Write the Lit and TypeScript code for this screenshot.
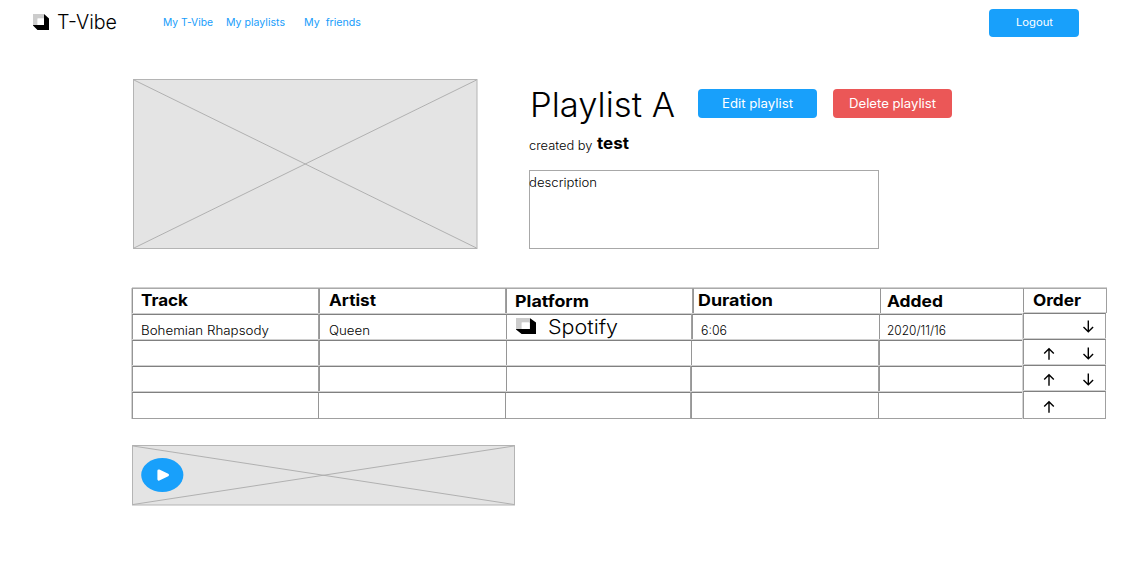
import { LitElement, html, css } from "lit";
import { customElement, property } from "lit/decorators.js";
import { styleMap } from "lit/directives/style-map.js";

/** One line of text stretched to a fixed measure. */
@customElement("fit-text")
class FitText extends LitElement {
  @property() text = "";
  @property({ type: Number }) width = 50;
  @property({ type: Number }) size = 13;
  @property({ type: Number }) weight = 400;
  static styles = css`
    :host { display: block; flex: none; }
    svg { display: block; overflow: visible; }
    text { fill: currentColor; font-family: Inter, "Noto Sans", sans-serif; white-space: pre; }
  `;
  render() {
    return html`<svg width=${this.width} height=${this.size}>
      <text x="0" y=${this.size * 0.8} font-size=${this.size} font-weight=${this.weight}
        textLength=${this.width} lengthAdjust="spacingAndGlyphs">${this.text}</text>
    </svg>`;
  }
}

const t = (text: string, width: number, size: number, weight = 400) =>
  html`<fit-text .text=${text} .width=${width} .size=${size} .weight=${weight}></fit-text>`;

const cube = (w: number, h: number) => html`<svg class="cube" width=${w} height=${h} viewBox="0 0 16 16" preserveAspectRatio="none">
  <path fill="#000" d="M11 0L16 4.5V16H4.5L0 11.5V11H11Z"/>
  <path fill="#ccc" d="M0 0H11V4.6H4.6V11H0Z"/>
  <path fill="#fff" d="M4.6 4.6H11V11H4.6Z"/>
</svg>`;

const arrow = (up: boolean) => html`<svg class="arrow" width="12" height="13" viewBox="0 0 12 13">
  <path d=${up ? "M6 12.7V1.8M1.2 6.6L6 1.8L10.8 6.6" : "M6.3 .4V11.8M1.5 7L6.3 11.8L11.1 7"}
    fill="none" stroke="#000" stroke-width="1.4"/>
</svg>`;

const cross = (w: number, h: number) => html`<svg class="cross" width=${w} height=${h} viewBox="0 0 ${w} ${h}">
  <rect x=".5" y=".5" width=${w - 1} height=${h - 1} fill="#e4e4e4" stroke="#b4b4b4"/>
  <path d="M1 1L${w - 1} ${h - 1}M1 ${h - 1}L${w - 1} 1" stroke="#aaa" stroke-width=".9"/>
</svg>`;

@customElement("app-root")
class AppRoot extends LitElement {
  static styles = css`
    :host { display: block; width: 1125px; height: 567px; background: #fff; color: #000; overflow: hidden; }
    * { box-sizing: border-box; }
    svg { display: block; flex: none; }
    header { display: flex; height: 79px; padding-left: 33px; align-items: flex-start; }
    .logo { display: flex; padding-top: 14px; width: 130px; }
    .logo .cube { margin-left: -0.5px; }
    .logo fit-text { margin: -1px 0 0 8px; }
    nav { display: flex; padding-top: 18px; width: 826px; color: #189dfb; }
    nav fit-text + fit-text { margin-left: 13px; }
    nav fit-text:last-child { margin-left: 19px; }
    .btn { display: flex; justify-content: center; border-radius: 4px; color: #fff; background: #18a0fb; }
    .logout { width: 90px; height: 28px; margin-top: 9px; padding-top: 9px; }
    .hero { display: flex; height: 209px; padding-left: 133px; }
    .info { margin-left: 52px; }
    .title { display: flex; height: 55px; }
    .name { margin-top: 10.5px; width: 145px; }
    .title .btn { width: 119px; height: 29px; margin: 10px 0 0 16px; padding-top: 9px; }
    .title .edit { margin-left: 23px; }
    .title .delete { background: #eb5757; }
    .by { display: flex; height: 36px; gap: 5px; padding-top: 2px; }
    .by fit-text { margin-left: -0.5px; }
    .by fit-text:first-child { margin-top: 3.5px; }
    .desc { width: 350px; height: 79px; border: 1px solid #a8a8a8; padding-top: 6px; margin-left: -1px; }
    .desc fit-text { margin-left: -1px; }
    .table { display: flex; padding-left: 132px; height: 157px; }
    .row { display: flex; height: 26px; }
    .cell { flex: none; display: flex; align-items: flex-start; border-left: 1px solid #969696; border-top: 1px solid #808080; box-shadow: 0 -1px #d0d0d0; }
    .cell.double { box-shadow: 0 -1px #d0d0d0, -1px 0 #a0a0a0; }
    .cell.soft { box-shadow: 0 -1px #d0d0d0, -1px 0 #d4d4d4; }
    .row:first-child .cell { border-top-color: #aaa; }
    .row:last-child { height: 27px; }
    .row:last-child .cell { border-bottom: 1px solid #a0a0a0; }
    .order .cell { border-right: 1px solid #a0a0a0; }
    .order .row { height: 26px; }
    .order .row:first-child { height: 25px; }
    .order .row:last-child { height: 28px; }
    .order .cell { gap: 27px; padding-left: 19px; }
    .slot { width: 12px; }
    .gap { width: 12px; }
    .player { display: grid; width: 383px; margin-left: 132px; }
    .player > * { grid-area: 1 / 1; }
    .play { align-self: center; margin-left: 9px; }
  `;

  private rows = [
    { w: [187, 187, 187, 187, 143], d: [1, 2, 3], c: [t("Track", 47, 16.2, 700), t("Artist", 47, 16.2, 700), t("Platform", 74, 16.2, 700), t("Duration", 75, 16.2, 700), t("Added", 56, 16.2, 700)], p: [[8, 4], [9, 4], [8, 5], [4, 4], [6, 5]] },
    { w: [187, 187, 186, 187, 144], d: [1, 3], c: [t("Bohemian Rhapsody", 128, 12.5, 300), t("Queen", 41, 12.5, 300), html`${cube(20, 16)}<div class="gap"></div>${t("Spotify", 70, 20, 300)}`, t("6:06", 26, 12.5, 300), t("2020/11/16", 59, 12.5, 300)], p: [[8, 9.5], [9, 10], [9, 3], [7.5, 9.5], [7, 9.5]] },
    { w: [187, 187, 185, 188, 144], d: [1, 4], c: [], p: [] },
    { w: [187, 187, 185, 188, 144], d: [1, 3, 4], c: [], p: [] },
    { w: [186, 187, 186, 187, 145], d: [3], c: [], p: [] },
  ] as { w: number[]; d: number[]; c: unknown[]; p: number[][] }[];

  render() {
    return html`
      <header>
        <div class="logo">${cube(16, 16)}${t("T-Vibe", 60, 20.2, 300)}</div>
        <nav>${t("My T-Vibe", 50, 10.4)}${t("My playlists", 59, 10.4)}${t("My  friends", 57, 10.4)}</nav>
        <div class="btn logout">${t("Logout", 37, 10.4)}</div>
      </header>
      <section class="hero">
        ${cross(344.5, 170)}
        <div class="info">
          <div class="title">
            <div class="name">${t("Playlist A", 145, 34, 300)}</div>
            <div class="btn edit">${t("Edit playlist", 71, 12.6)}</div>
            <div class="btn delete">${t("Delete playlist", 87, 12.6)}</div>
          </div>
          <div class="by">${t("created by", 63.5, 12.5, 300)}${t("test", 32, 16.5, 700)}</div>
          <div class="desc">${t("description", 68, 12.5, 300)}</div>
        </div>
      </section>
      <section class="table">
        <div>
          ${this.rows.map((r) => html`<div class="row">${r.w.map((w, i) => html`
            <div class="cell ${r.d.includes(i) ? "double" : i === 0 ? "soft" : ""}" style=${styleMap({ width: `${w}px`, padding: r.p[i] ? `${r.p[i][1]}px 0 0 ${r.p[i][0]}px` : "0" })}>${r.c[i]}</div>`)}</div>`)}
        </div>
        <div class="order">
          <div class="row"><div class="cell" style=${styleMap({ width: "84px", padding: "4px 0 0 9px" })}>${t("Order", 48, 16.2, 700)}</div></div>
          ${([[false, true, 6], [true, true, 7], [true, true, 7], [true, false, 8]] as [boolean, boolean, number][]).map(([up, down, top]) => html`
            <div class="row"><div class="cell soft" style=${styleMap({ width: "83px", "padding-top": `${top}px` })}>
              <div class="slot">${up ? arrow(true) : ""}</div><div class="slot">${down ? arrow(false) : ""}</div>
            </div></div>`)}
        </div>
      </section>
      <section class="player">
        ${cross(383, 60.5)}
        <svg class="play" width="43" height="34" viewBox="0 0 43 34">
          <ellipse cx="21.3" cy="17" rx="21.1" ry="17" fill="#18a0fb"/>
          <path d="M17.8 12.8L26.6 17L17.8 21.2Z" fill="#fff" stroke="#fff" stroke-width="2.8" stroke-linejoin="round"/>
        </svg>
      </section>`;
  }
}
